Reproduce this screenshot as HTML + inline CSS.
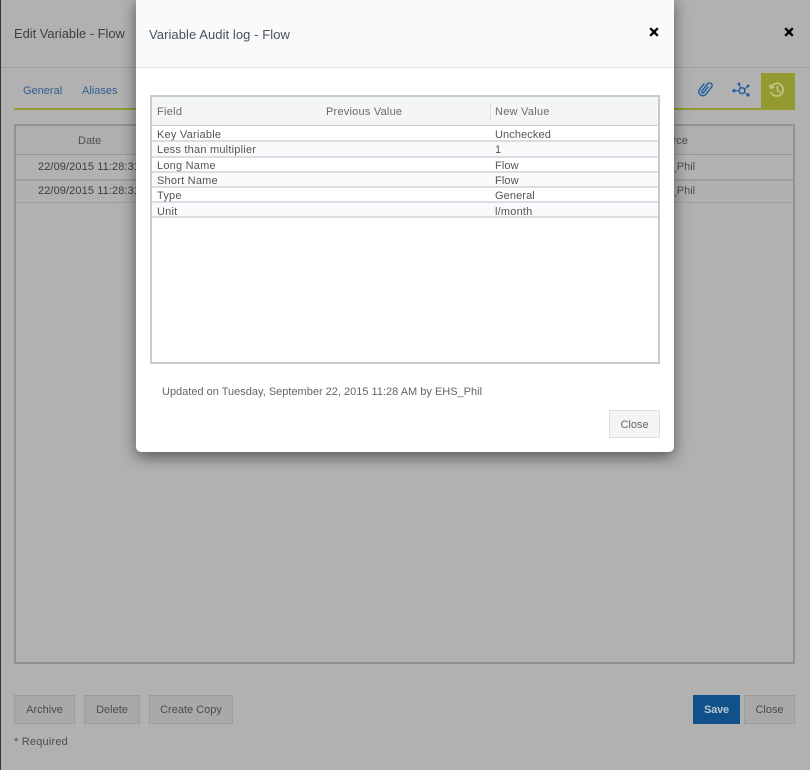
<!DOCTYPE html>
<html><head><meta charset="utf-8"><style>
html,body{margin:0;padding:0;width:810px;height:770px;overflow:hidden;background:#b1b1b1}
body{position:relative;font-family:"Liberation Sans",sans-serif;font-size:11px;color:#4a4a4a}
.a{position:absolute}
.t{position:absolute;white-space:nowrap;line-height:14px}
.btn{position:absolute;box-sizing:border-box;height:29px;border:1px solid #9c9c9c;background:#a9a9a9;color:#4b4b4b;text-align:center;line-height:29px;font-size:11px}
.row{position:absolute;left:2px;width:506px;box-sizing:border-box;border-bottom:2px solid #dadee3}
.row span{position:absolute;top:1px;line-height:14px;white-space:nowrap;color:#555;font-size:11px;letter-spacing:.1px}
.row span:first-child{letter-spacing:.22px}
</style></head><body>
<div class="a" style="left:0;top:0;width:1px;height:770px;background:#333"></div>
<div class="a" style="left:1px;top:67px;width:809px;height:1px;background:#9f9f9f"></div>
<div class="t" style="left:14px;top:27px;font-size:12.9px;color:#3f3f3f">Edit Variable - Flow</div>
<svg class="a" style="left:784px;top:27px" width="10" height="10" viewBox="0 0 10 10"><path d="M1.200 1.200 8.800 8.800M8.800 1.200 1.200 8.800" stroke="#000" stroke-width="2.400"/></svg>
<div class="t" style="left:23px;top:84px;color:#305f92">General</div>
<div class="t" style="left:82px;top:84px;color:#305f92">Aliases</div>
<div class="a" style="left:14px;top:108px;width:781px;height:2px;background:#939b30"></div>
<div class="a" style="left:761px;top:73px;width:34px;height:37px;background:#939b30"></div>
<svg class="a" style="left:695px;top:79px" width="20" height="20" viewBox="0 0 20 20" fill="none" stroke="#1c5ca0" stroke-width="1.400" stroke-linecap="round"><g transform="rotate(38 10 10)"><path d="M6 6.500v7a4 4 0 0 0 8 0V4.500a2.600 2.600 0 0 0-5.200 0v9a1.200 1.200 0 0 0 2.400 0V6.500"/></g></svg>
<svg class="a" style="left:731px;top:80px" width="20" height="19" viewBox="0 0 20 19" fill="#1c5ca0" stroke="#1c5ca0"><circle cx="11" cy="10.700" r="2.900" fill="none" stroke-width="1.500"/><path d="M9.500 8 8 4M13.500 9 17 6M13.500 12.500 17 15M8 10.700H3" stroke-width="1"/><circle cx="8" cy="4" r="1.400" stroke="none"/><circle cx="17" cy="6" r="1.400" stroke="none"/><circle cx="17" cy="15" r="1.600" stroke="none"/><circle cx="3" cy="10.700" r="1.600" stroke="none"/></svg>
<svg class="a" style="left:768px;top:81px" width="18" height="18" viewBox="0 0 18 18" fill="none" stroke="#c3c88a" stroke-width="1.600"><path d="M3.500 5.500A6.300 6.300 0 1 1 3 11"/><path d="M1.500 3.500 2.500 7.300 6.300 6.300" stroke-width="1.300" fill="#c3c88a"/><path d="M9.500 5V9.500L12.500 11.500"/></svg>

<div class="a" style="left:14px;top:124px;width:781px;height:540px;box-sizing:border-box;border:2px solid #8e9396"></div>
<div class="a" style="left:16px;top:126px;width:777px;height:28px;background:#aeb0b0;border-bottom:1px solid #979a9c"></div>
<div class="a" style="left:16px;top:155px;width:777px;height:24px;border-bottom:2px solid #9c9fa1;background:#b2b2b2"></div>
<div class="a" style="left:16px;top:181px;width:777px;height:21px;border-bottom:1px solid #9c9fa1;background:#afb0b1"></div>
<div class="t" style="left:78px;top:134px;color:#4f4f4f">Date</div>
<div class="t" style="left:38px;top:160px;color:#3d3d3d;letter-spacing:.1px">22/09/2015 11:28:31</div>
<div class="t" style="left:38px;top:184px;color:#3d3d3d;letter-spacing:.1px">22/09/2015 11:28:31</div>
<div class="t" style="left:653px;top:134px;color:#4f4f4f">Source</div>
<div class="t" style="left:648px;top:160px;color:#4f4f4f">EHS_Phil</div>
<div class="t" style="left:648px;top:184px;color:#4f4f4f">EHS_Phil</div>

<div class="btn" style="left:14px;top:695px;width:61px">Archive</div>
<div class="btn" style="left:84px;top:695px;width:56px">Delete</div>
<div class="btn" style="left:149px;top:695px;width:84px">Create Copy</div>
<div class="t" style="left:14px;top:735px;letter-spacing:.2px;color:#4d4d4d">* Required</div>
<div class="btn" style="left:693px;top:695px;width:47px;background:#0f5188;border:none;line-height:30px;color:#b9c5d0;font-weight:bold;letter-spacing:-.2px">Save</div>
<div class="btn" style="left:744px;top:695px;width:51px">Close</div>

<div class="a" style="left:136px;top:-4px;width:538px;height:456px;background:#fff;border-radius:5px;box-shadow:0 5px 15px rgba(0,0,0,.5)">
  <div class="a" style="left:0;top:0;width:538px;height:72px;box-sizing:border-box;background:#fafafa;border-bottom:1px solid #e5e5e5;border-radius:5px 5px 0 0"></div>
</div>
<div class="t" style="left:149px;top:28px;font-size:13px;color:#45515c;letter-spacing:.07px">Variable Audit log - Flow</div>
<svg class="a" style="left:649px;top:27px" width="10" height="10" viewBox="0 0 10 10"><path d="M1.200 1.200 8.800 8.800M8.800 1.200 1.200 8.800" stroke="#000" stroke-width="2.400"/></svg>

<div class="a" style="left:150px;top:95px;width:510px;height:269px;box-sizing:border-box;border:2px solid #c6cbd0;background:#fff;overflow:hidden">
  <div class="a" style="left:0;top:0;width:506px;height:28px;background:#f4f6f6;border-bottom:1px solid #c9ced2"></div>
  <div class="a" style="left:338px;top:6px;width:1px;height:17px;background:#dcdfe1"></div>
  <div class="t" style="left:5px;top:8px;color:#6a6a6a;letter-spacing:.3px">Field</div>
  <div class="t" style="left:174px;top:8px;color:#6a6a6a;letter-spacing:.22px">Previous Value</div>
  <div class="t" style="left:343px;top:8px;color:#6a6a6a;letter-spacing:.25px">New Value</div>
  <div class="row" style="left:0;top:29px;height:16px;background:#fff"><span style="left:5px;top:2px">Key Variable</span><span style="left:343px;top:2px">Unchecked</span></div>
  <div class="row" style="left:0;top:45px;height:16px;background:#f8fafc"><span style="left:5px">Less than multiplier</span><span style="left:343px">1</span></div>
  <div class="row" style="left:0;top:61px;height:15px;background:#fff"><span style="left:5px">Long Name</span><span style="left:343px">Flow</span></div>
  <div class="row" style="left:0;top:76px;height:15px;background:#f8fafc"><span style="left:5px">Short Name</span><span style="left:343px">Flow</span></div>
  <div class="row" style="left:0;top:91px;height:15px;background:#fff"><span style="left:5px">Type</span><span style="left:343px">General</span></div>
  <div class="row" style="left:0;top:106px;height:15px;background:#f8fafc"><span style="left:5px;top:2px">Unit</span><span style="left:343px;top:2px;letter-spacing:.2px">l/month</span></div>
</div>
<div class="t" style="left:162px;top:385px;color:#666">Updated on Tuesday, September 22, 2015 11:28 AM by EHS_Phil</div>
<div class="btn" style="left:609px;top:410px;width:51px;height:28px;background:#f4f4f4;border-color:#dedede;color:#666;line-height:28px">Close</div>
</body></html>
